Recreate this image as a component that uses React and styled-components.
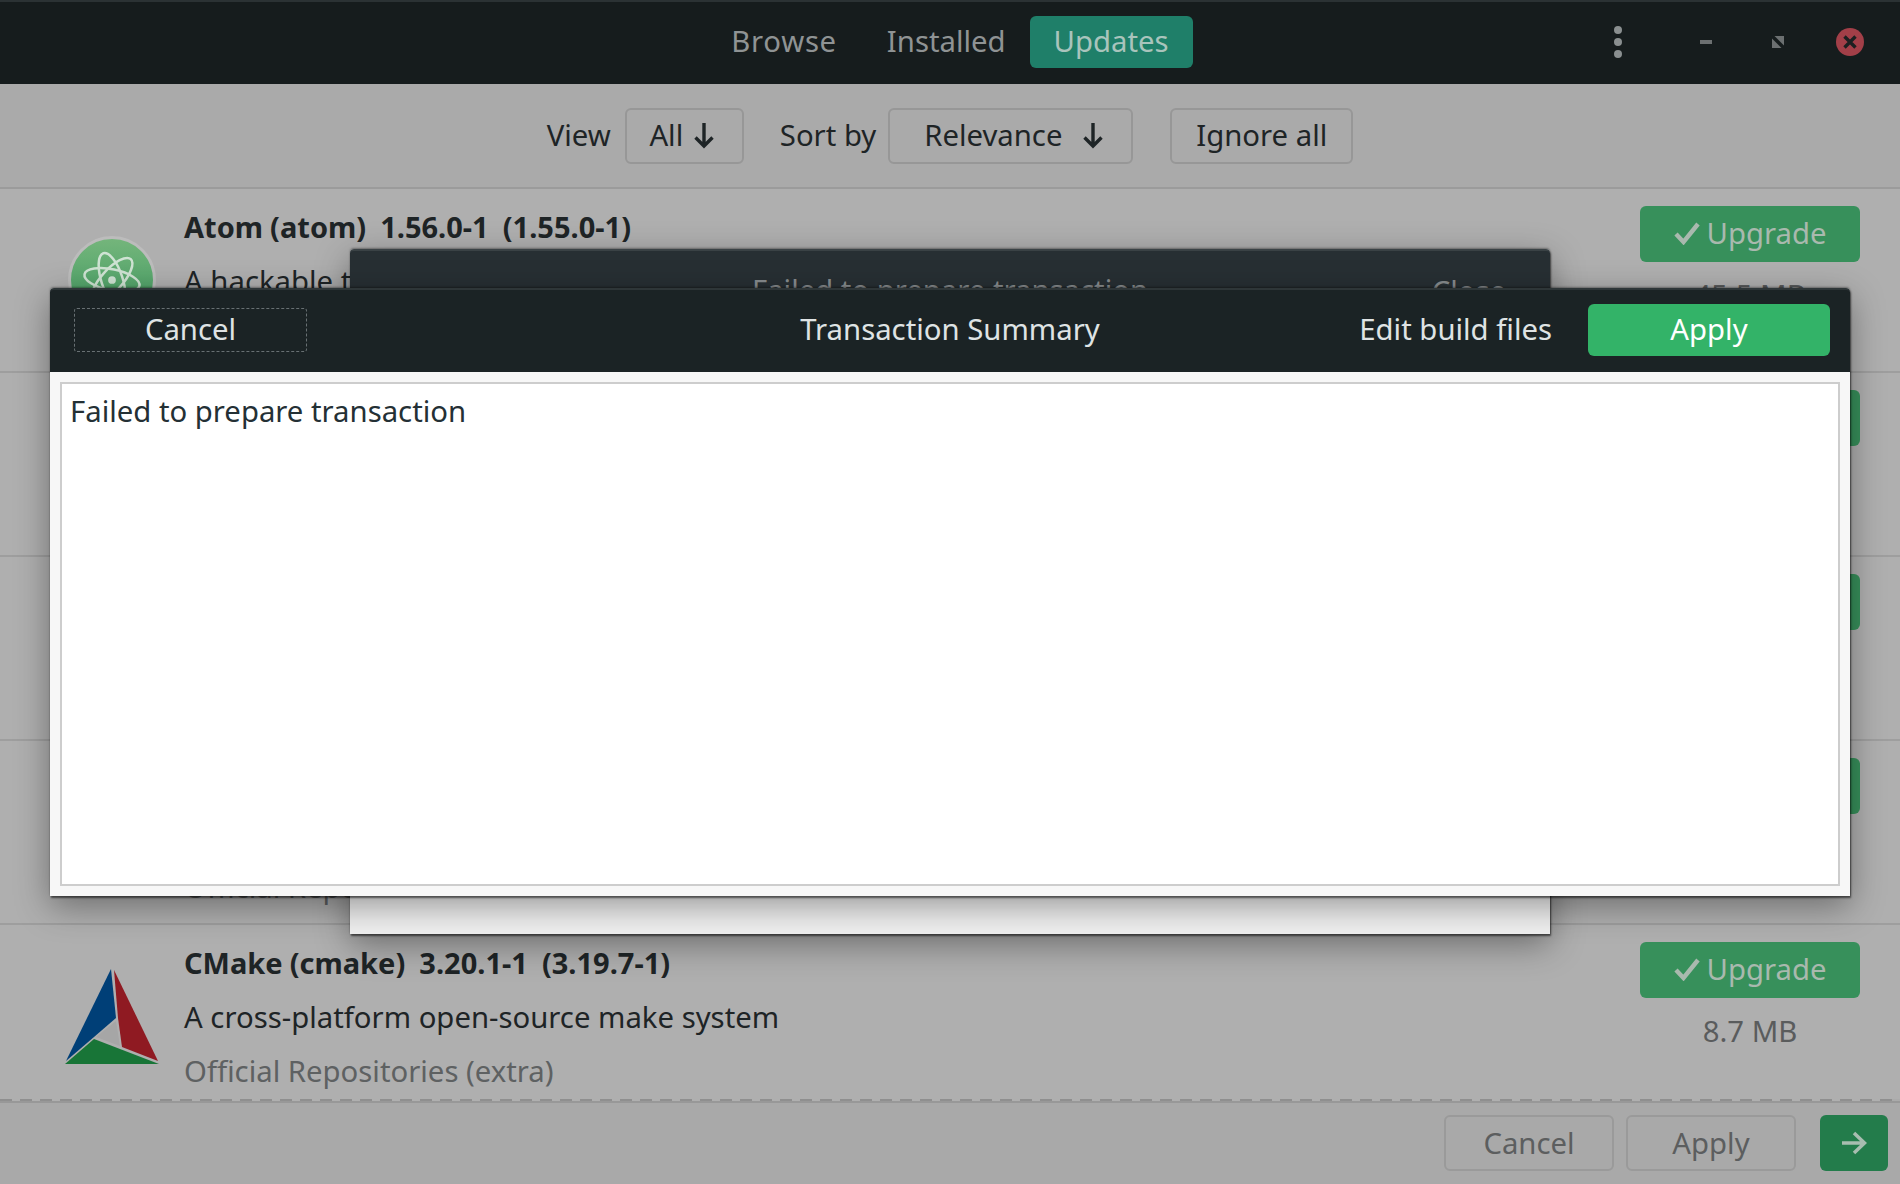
import React from "react";
import styled, { createGlobalStyle } from "styled-components";

const GlobalStyle = createGlobalStyle`
  html, body {
    margin: 0;
    padding: 0;
    background: #aaaaaa;
  }
  body {
    font-family: "Noto Sans", "Open Sans", sans-serif;
    font-size: 29.3px;
    overflow: hidden;
  }
`;

// Window
const Window = styled.div`
  position: relative;
  width: 1900px;
  height: 1184px;
  overflow: hidden;
  display: flex;
  flex-direction: column;
`;

/* Header bar */
const HeaderBar = styled.header`
  height: 80px;
  padding-bottom: 2px;
  border-top: 2px solid #2b3234;
  background: #161c1d;
  display: grid;
  grid-template-columns: 1fr auto 1fr;
  align-items: center;
`;

const Tabs = styled.nav`
  display: flex;
  align-items: center;
`;

const Tab = styled.div`
  height: 50px;
  padding: 0 24px 2px;
  margin-right: ${(p) => p.$after || 0}px;
  border-radius: 6px;
  display: flex;
  align-items: center;
  letter-spacing: ${(p) => p.$track || 0}px;
  color: ${(p) => (p.$active ? "#a9c4bc" : "#8f9394")};
  background: ${(p) => (p.$active ? "#1f7f69" : "transparent")};
`;

const WindowControls = styled.div`
  display: flex;
  align-items: center;
  justify-content: flex-end;
  padding-right: 14px;
`;

const ControlSlot = styled.div`
  width: ${(p) => p.$width}px;
  display: flex;
  justify-content: center;
`;

/* Toolbar */
const Toolbar = styled.div`
  height: 103px;
  border-bottom: 2px solid #9b9b9b;
  background: #aaaaaa;
  display: flex;
  align-items: center;
  justify-content: center;
  color: #1e2426;
`;

const ToolLabel = styled.span`
  margin-left: ${(p) => p.$left || 0}px;
  margin-right: ${(p) => p.$right}px;
  padding-bottom: 2px;
`;

const ToolButton = styled.div`
  box-sizing: border-box;
  width: ${(p) => p.$width}px;
  height: 56px;
  margin-left: ${(p) => p.$left || 0}px;
  padding: 0 ${(p) => p.$padRight || 0}px 2px ${(p) => p.$padLeft || 0}px;
  border: 2px solid #979797;
  border-radius: 6px;
  display: flex;
  align-items: center;
  justify-content: center;
  gap: ${(p) => p.$gap || 0}px;
`;

/* Update list */
const List = styled.main`
  height: 910px;
  overflow: hidden;
  background: #afafaf;
`;

const Row = styled.article`
  box-sizing: border-box;
  height: 184px;
  border-bottom: 2px solid #9e9e9e;
  display: grid;
  grid-template-columns: 184px 1fr 260px;
`;

const IconCell = styled.div`
  padding-left: ${(p) => p.$left}px;
  padding-top: ${(p) => p.$top}px;
`;

const AppIconCircle = styled.div`
  box-sizing: border-box;
  width: 88px;
  height: 88px;
  border-radius: 50%;
  border: 3px solid #bcbcbc;
  background: linear-gradient(#74b57b, #3d9a60);
  display: flex;
  align-items: center;
  justify-content: center;
`;

const TextCell = styled.div`
  padding-top: 19px;
  display: flex;
  flex-direction: column;
  color: #1e2426;
`;

const Line = styled.div`
  height: 53.5px;
  line-height: 38px;
  white-space: pre;
`;

const Name = styled(Line)`
  font-size: 29px;
  font-weight: 700;
  word-spacing: -0.5px;
`;

const Repo = styled(Line)`
  padding-top: 1px;
  color: #5e6162;
`;

const ActionCell = styled.div`
  padding-top: 17px;
  padding-right: 40px;
  display: flex;
  flex-direction: column;
  align-items: stretch;
`;

const UpgradeButton = styled.div`
  height: 54px;
  padding-bottom: 2px;
  border-radius: 6px;
  background: #37905b;
  color: #a9b9ae;
  display: flex;
  align-items: center;
  justify-content: center;
  gap: 7px;
`;

const Size = styled.div`
  margin-top: 13px;
  text-align: center;
  color: #5a5c5d;
`;

/* Footer */
const Undershoot = styled.div`
  height: 2px;
  margin-right: 8px;
  background: repeating-linear-gradient(90deg, #8f8f8f 0 12px, transparent 12px 20px);
  background-color: #afafaf;
`;

const Footer = styled.footer`
  flex: 1;
  border-top: 2px solid #989898;
  background: #a9a9a9;
  display: flex;
  align-items: flex-start;
  justify-content: flex-end;
  gap: 12px;
  padding: 12px 12px 0 0;
`;

const FooterButton = styled.div`
  box-sizing: border-box;
  width: 170px;
  height: 56px;
  border: 2px solid #9a9a9a;
  border-radius: 6px;
  color: #5c5e5f;
  display: flex;
  align-items: center;
  justify-content: center;
`;

const NextButton = styled.div`
  width: 68px;
  height: 56px;
  margin-left: 12px;
  border-radius: 6px;
  background: #237c4b;
  display: flex;
  align-items: center;
  justify-content: center;
`;

/* Dialogs */
const Dialog = styled.section`
  position: absolute;
  left: ${(p) => p.$left}px;
  top: ${(p) => p.$top}px;
  width: ${(p) => p.$width}px;
  height: ${(p) => p.$height}px;
  border-radius: 4px 4px 0 0;
  display: flex;
  flex-direction: column;
  background: ${(p) => p.$bg};
  box-shadow: 1px 2px 2px rgba(0, 0, 0, 0.55), 0 -1px 2px rgba(0, 0, 0, 0.35),
    0 10px 34px rgba(0, 0, 0, 0.38);
`;

const DialogHeader = styled.div`
  height: 79px;
  padding-bottom: 3px;
  flex-shrink: 0;
  border-top: 2px solid ${(p) => p.$edge};
  border-radius: 4px 4px 0 0;
  background: ${(p) => p.$bg};
  color: ${(p) => p.$color};
  display: grid;
  grid-template-columns: 1fr auto 1fr;
  align-items: center;
`;

const HeaderLeft = styled.div`
  padding-left: 24px;
`;

const HeaderLabel = styled.span`
  padding-bottom: 2px;
`;

const HeaderRight = styled.div`
  display: flex;
  align-items: center;
  justify-content: flex-end;
  gap: 36px;
  padding-right: ${(p) => p.$right}px;
`;

const CancelButton = styled.div`
  box-sizing: border-box;
  width: 233px;
  height: 44px;
  padding-bottom: 2px;
  border: 1.5px dashed #687073;
  border-radius: 3px;
  color: #dfe3e4;
  display: flex;
  align-items: center;
  justify-content: center;
`;

const ApplyButton = styled.div`
  width: 242px;
  height: 50px;
  padding-bottom: 2px;
  border-radius: 6px;
  background: #33b368;
  color: #ffffff;
  display: flex;
  align-items: center;
  justify-content: center;
`;

const DialogBody = styled.div`
  flex: 1;
  padding: 10px;
  display: flex;
`;

const OutputBox = styled.div`
  flex: 1;
  border: 2px solid #cdcdcd;
  background: #ffffff;
  color: #243035;
  padding: 8px 8px;
  line-height: 38px;
`;

/* Drawings */
const DownArrow = () => (
  <svg width="22" height="28" viewBox="0 0 22 28" fill="none">
    <path d="M11 2V25M2.5 16.5L11 25L19.5 16.5" stroke="#1e2426" strokeWidth="3.4" />
  </svg>
);

const RightArrow = () => (
  <svg width="26" height="24" viewBox="0 0 26 24" fill="none">
    <path d="M1 12H23M13 2L23.5 12L13 22" stroke="#a8bdb0" strokeWidth="3.6" />
  </svg>
);

const CheckMark = () => (
  <svg width="26" height="24" viewBox="0 0 26 24" fill="none">
    <path d="M2 13L9.5 21L24 3" stroke="#a9b9ae" strokeWidth="4.4" />
  </svg>
);

const Kebab = () => (
  <svg width="8" height="32" viewBox="0 0 8 32" fill="#8a8f90">
    <circle cx="4" cy="4" r="4" />
    <circle cx="4" cy="16" r="4" />
    <circle cx="4" cy="28" r="4" />
  </svg>
);

const MinimizeIcon = () => (
  <svg width="12" height="4" viewBox="0 0 12 4">
    <rect width="12" height="4" fill="#6c7071" />
  </svg>
);

const RestoreIcon = () => (
  <svg width="12" height="12" viewBox="0 0 12 12" fill="#6c7071">
    <path d="M2.5 0H12V9.5Z" />
    <path d="M0 2.5V12H9.5Z" />
  </svg>
);

const CloseIcon = () => (
  <svg width="28" height="28" viewBox="0 0 28 28">
    <circle cx="14" cy="14" r="14" fill="#a23f48" />
    <path d="M8.5 8.5L19.5 19.5M19.5 8.5L8.5 19.5" stroke="#1b2021" strokeWidth="3.4" />
  </svg>
);

const AtomGlyph = () => (
  <svg width="60" height="60" viewBox="0 0 62 62" fill="none" stroke="#cfe3d3" strokeWidth="2.6">
    <ellipse cx="31" cy="31" rx="29" ry="11" transform="rotate(12 31 31)" />
    <ellipse cx="31" cy="31" rx="29" ry="11" transform="rotate(72 31 31)" />
    <ellipse cx="31" cy="31" rx="29" ry="11" transform="rotate(132 31 31)" />
    <circle cx="31" cy="31" r="4" fill="#cfe3d3" stroke="none" />
  </svg>
);

const CMakeLogo = () => (
  <svg width="98" height="98" viewBox="0 0 96 98">
    <path d="M47 1L52 50L30 69L2 93Z" fill="#003f77" />
    <path d="M50 2L94 93L58 79L54 50Z" fill="#8f1a22" />
    <path d="M30 71L95 96H1Z" fill="#187537" />
    <path d="M52 53L32 69L56 78Z" fill="#a6a6a6" />
  </svg>
);

const rows = [
  {
    icon: "atom",
    name: "Atom (atom)  1.56.0-1  (1.55.0-1)",
    description: "A hackable text editor for the 21st Century",
    repo: "Official Repositories (community)",
    size: "45.5 MB",
  },
  { repo: "Official Repositories (extra)" },
  { repo: "Official Repositories (extra)" },
  { repo: "Official Repositories (extra)" },
  {
    icon: "cmake",
    name: "CMake (cmake)  3.20.1-1  (3.19.7-1)",
    description: "A cross-platform open-source make system",
    repo: "Official Repositories (extra)",
    size: "8.7 MB",
  },
];

function UpdateRow({ icon, name, description, repo, size }) {
  return (
    <Row>
      <IconCell $left={icon === "cmake" ? 63 : 68} $top={icon === "cmake" ? 43 : 47}>
        {icon === "atom" && (
          <AppIconCircle>
            <AtomGlyph />
          </AppIconCircle>
        )}
        {icon === "cmake" && <CMakeLogo />}
      </IconCell>
      <TextCell>
        <Name>{name}</Name>
        <Line>{description}</Line>
        <Repo>{repo}</Repo>
      </TextCell>
      <ActionCell>
        <UpgradeButton>
          <CheckMark />
          Upgrade
        </UpgradeButton>
        {size && <Size>{size}</Size>}
      </ActionCell>
    </Row>
  );
}

export default function App() {
  return (
    <Window>
      <GlobalStyle />
      <HeaderBar>
        <div />
        <Tabs>
          <Tab $after={2} $track={0.7}>Browse</Tab>
          <Tab>Installed</Tab>
          <Tab $active>Updates</Tab>
        </Tabs>
        <WindowControls>
          <ControlSlot $width={104}><Kebab /></ControlSlot>
          <ControlSlot $width={72}><MinimizeIcon /></ControlSlot>
          <ControlSlot $width={72}><RestoreIcon /></ControlSlot>
          <ControlSlot $width={72}><CloseIcon /></ControlSlot>
        </WindowControls>
      </HeaderBar>

      <Toolbar>
        <ToolLabel $right={14}>View</ToolLabel>
        <ToolButton $width={119} $gap={10} $padRight={4}>
          All <DownArrow />
        </ToolButton>
        <ToolLabel $left={36} $right={12}>Sort by</ToolLabel>
        <ToolButton $width={245} $gap={20} $padLeft={7}>
          Relevance <DownArrow />
        </ToolButton>
        <ToolButton $width={183} $left={37}>Ignore all</ToolButton>
      </Toolbar>

      <List>
        {rows.map((row, index) => (
          <UpdateRow key={index} {...row} />
        ))}
      </List>
      <Undershoot />
      <Footer>
        <FooterButton>Cancel</FooterButton>
        <FooterButton>Apply</FooterButton>
        <NextButton><RightArrow /></NextButton>
      </Footer>

      <Dialog $left={350} $top={249} $width={1200} $height={685} $bg="#f0f0f0">
        <DialogHeader $bg="#272f33" $edge="#3a4245" $color="#868b8d">
          <div />
          <HeaderLabel>Failed to prepare transaction</HeaderLabel>
          <HeaderRight $right={44}>Close</HeaderRight>
        </DialogHeader>
      </Dialog>

      <Dialog $left={50} $top={288} $width={1800} $height={608} $bg="#f7f7f7">
        <DialogHeader $bg="#1b2325" $edge="#2e3638" $color="#dfe3e4">
          <HeaderLeft>
            <CancelButton>Cancel</CancelButton>
          </HeaderLeft>
          <HeaderLabel>Transaction Summary</HeaderLabel>
          <HeaderRight $right={20}>
            <HeaderLabel>Edit build files</HeaderLabel>
            <ApplyButton>Apply</ApplyButton>
          </HeaderRight>
        </DialogHeader>
        <DialogBody>
          <OutputBox>Failed to prepare transaction</OutputBox>
        </DialogBody>
      </Dialog>
    </Window>
  );
}
